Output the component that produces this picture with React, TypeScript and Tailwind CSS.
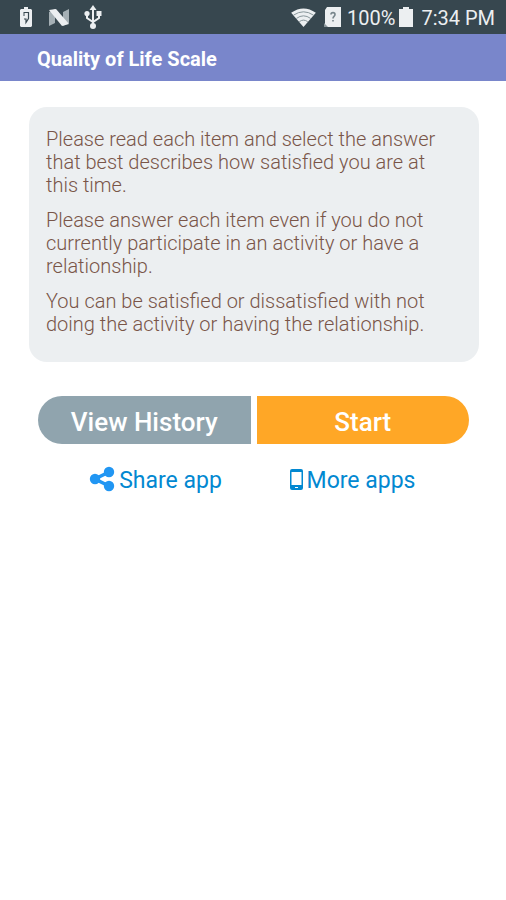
const paragraphs = [
  "Please read each item and select the answer that best describes how satisfied you are at this time.",
  "Please answer each item even if you do not currently participate in an activity or have a relationship.",
  "You can be satisfied or dissatisfied with not doing the activity or having the relationship.",
];

function StatusBar() {
  return (
    <div className="flex h-[34px] items-center justify-between bg-[#37474f] pl-5 pr-[11px] text-[#eceff1]">
      <div className="flex items-center">
        <svg viewBox="0 0 12 20" className="h-5 w-3" aria-label="Battery charging">
          <path d="M4 0h4v2h3l1 1v16l-1 1H1l-1-1V3l1-1h3z" fill="currentColor" />
          <path d="M4 5.500h4.500v6L6 15.500v-3.500H4" fill="none" stroke="#37474f" strokeWidth="1.2" />
          <path d="M4 5v4" fill="none" stroke="#37474f" strokeWidth="1" />
        </svg>
        <svg viewBox="0 0 20 17" className="ml-[17px] h-[17px] w-5" aria-label="Android N">
          <path d="M0 3l6-3v14l-6 3zM14 3l6-3v14l-6 3z" fill="#a5b0b5" />
          <path d="M0 1l7-1 13 15-7 2z" fill="currentColor" />
        </svg>
        <svg viewBox="0 0 18 24" className="ml-[15px] h-6 w-[18px]" aria-label="USB" fill="none" stroke="currentColor" strokeWidth="2">
          <path d="M9 3v18M3 8v5l6 4 6-4V8" />
          <path d="M9 0l3.500 5h-7z" fill="currentColor" stroke="none" />
          <circle cx="9" cy="21" r="3" fill="currentColor" stroke="none" />
          <circle cx="3" cy="8.500" r="2.600" fill="currentColor" stroke="none" />
          <path d="M12.500 6h5v5h-5z" fill="currentColor" stroke="none" />
        </svg>
      </div>
      <div className="flex items-center text-xl">
        <svg viewBox="0 0 26 20" className="h-[19px] w-[25px]" aria-label="Wi-Fi">
          <path d="M13 20L0 5Q13-4 26 5z" fill="currentColor" />
          <path d="M2.500 7.500Q13 .5 23.500 7.500M5.500 11Q13 5.500 20.500 11M8.500 14.500Q13 11 17.500 14.500" fill="none" stroke="#829095" strokeWidth="1" />
        </svg>
        <svg viewBox="0 0 17 20" className="ml-2 h-5 w-[17px]" aria-label="Unknown SIM">
          <path d="M3 0h14v20H0v-2l1-1V3z" fill="currentColor" />
          <path d="M0 16l4 4H0z" fill="#8a969b" />
          <path d="M7 7.500c0-2.500 4-2.500 4 0 0 2-2 1.700-2 4M9 13v1.500" fill="none" stroke="#78868c" strokeWidth="1.6" />
        </svg>
        <span className="ml-1.5 pt-0.5">100%</span>
        <svg viewBox="0 0 14 20" className="ml-1 h-5 w-3.5" aria-label="Battery full">
          <path d="M4 0h6v2h4v18H0V2h4z" fill="currentColor" />
        </svg>
        <span className="ml-2 pt-0.5">7:34 PM</span>
      </div>
    </div>
  );
}

export default function App() {
  return (
    <div className="min-h-screen bg-white font-['Roboto',sans-serif]">
      <StatusBar />
      <header className="flex h-[47px] items-center bg-[#7986cb] px-[37px] pt-0.5">
        <h1 className="text-xl font-bold text-white">Quality of Life Scale</h1>
      </header>

      <main className="pt-[26px] pr-[27px] pl-[29px]">
        <section className="space-y-3 rounded-[18px] bg-[#eceff1] px-[17px] pt-[21px] pb-[26px] text-xl leading-[23px] font-light text-[#795548]">
          {paragraphs.map((p) => (
            <p key={p}>{p}</p>
          ))}
        </section>

        <div className="mt-[34px] grid grid-cols-2 gap-1.5 pr-2.5 pl-[9px] text-[26px] font-medium text-white">
          <button type="button" className="h-12 rounded-l-full rounded-r-xs bg-[#90a4ae] pt-1">
            View History
          </button>
          <button type="button" className="h-12 rounded-l-xs rounded-r-full bg-[#ffa726] pt-1">
            Start
          </button>
        </div>

        <nav className="mt-[21px] grid grid-cols-2 pr-7 pl-7 text-[23px] leading-8 text-[#0288d1]">
          <a href="#share" className="flex items-center justify-center gap-1">
            <svg viewBox="0 0 26 26" className="mb-1 h-[26px] w-[26px]" fill="#2196f3" aria-hidden="true">
              <path d="M20 6L6 13l14 7" fill="none" stroke="#2196f3" strokeWidth="3.6" />
              <circle cx="20" cy="6" r="5.2" />
              <circle cx="6" cy="13" r="5.2" />
              <circle cx="20" cy="20" r="5.2" />
            </svg>
            Share app
          </a>
          <a href="#more" className="flex items-center justify-center gap-1">
            <svg viewBox="0 0 13 21" className="mb-1 h-[21px] w-[13px]" aria-hidden="true">
              <path d="M2 0h9a2 2 0 012 2v17a2 2 0 01-2 2H2a2 2 0 01-2-2V2a2 2 0 012-2zM1.500 3v13h10V3zM5 18v1h3v-1z" fill="#0288d1" fillRule="evenodd" />
            </svg>
            More apps
          </a>
        </nav>
      </main>
    </div>
  );
}
